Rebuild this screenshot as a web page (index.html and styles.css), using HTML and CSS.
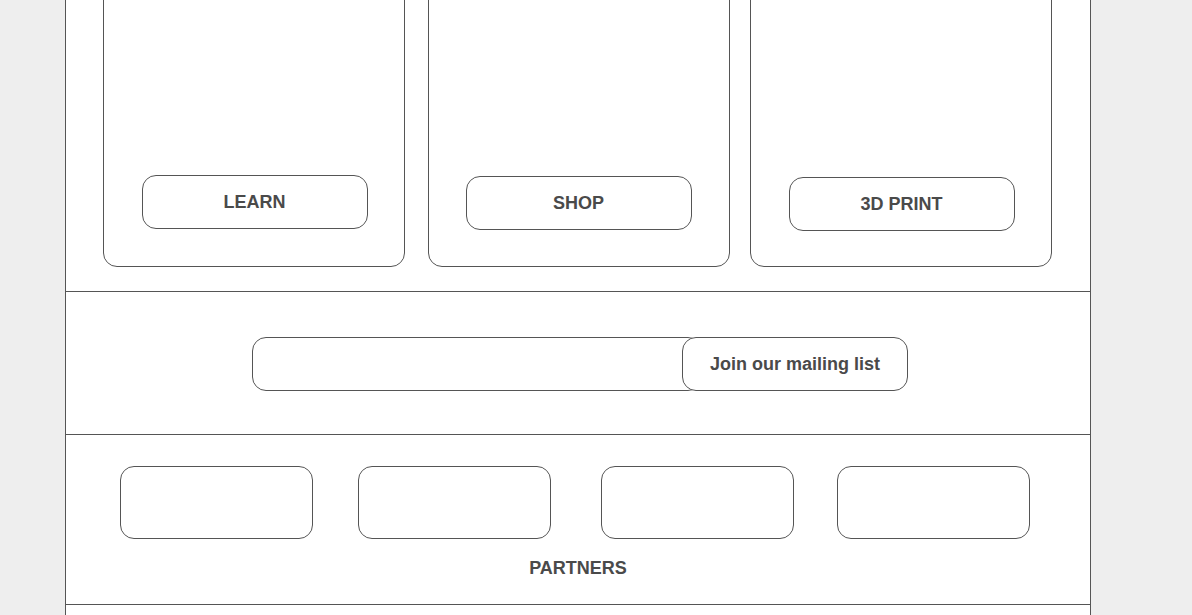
FILE: index.html
```html
<!DOCTYPE html>
<html lang="en">
<head>
    <meta charset="UTF-8">
    <meta name="viewport" content="width=device-width, initial-scale=1.0">
    <title>Home</title>
    <link rel="stylesheet" href="styles.css">
</head>
<body>
    <div class="page">
        <section class="features">
            <div class="card">
                <button class="card-button">LEARN</button>
            </div>
            <div class="card">
                <button class="card-button">SHOP</button>
            </div>
            <div class="card">
                <button class="card-button">3D PRINT</button>
            </div>
        </section>

        <section class="mailing">
            <form class="mailing-form" onsubmit="return false">
                <input type="email" class="mailing-input" aria-label="Email address">
                <button type="submit" class="mailing-button">Join our mailing list</button>
            </form>
        </section>

        <section class="partners">
            <div class="partner-logos">
                <div class="partner"></div>
                <div class="partner"></div>
                <div class="partner"></div>
                <div class="partner"></div>
            </div>
            <h2 class="partners-title">PARTNERS</h2>
        </section>

        <footer class="footer"></footer>
    </div>
</body>
</html>
```

FILE: styles.css
```css
body {
    margin: 0;
    background-color: #eeeeee;
    font-family: 'Liberation Sans', Arial, sans-serif;
    color: #4a4a4a;
}

.page {
    width: 1024px;
    margin: -40px 0 0 65px;
    background-color: #fff;
    border-left: 1px solid #555;
    border-right: 1px solid #555;
}

.features {
    display: flex;
    padding: 24px 38px 24px 37px;
    border-bottom: 1px solid #555;
}

.card {
    width: 302px;
    height: 283px;
    box-sizing: border-box;
    border: 1px solid #555;
    border-radius: 14px;
    display: flex;
    flex-direction: column;
    justify-content: flex-end;
    align-items: center;
    padding: 0 0 37px 1px;
}

.card:nth-child(2) {
    margin-left: 23px;
    padding: 0 1px 36px 0;
}

.card:nth-child(3) {
    margin-left: 20px;
    padding-bottom: 35px;
}

.card-button,
.mailing-button {
    width: 226px;
    height: 54px;
    box-sizing: border-box;
    border: 1px solid #555;
    border-radius: 14px;
    background-color: #fff;
    font-family: inherit;
    font-size: 18px;
    font-weight: bold;
    color: #4a4a4a;
    cursor: pointer;
}

.mailing {
    padding: 45px 0 43px;
    border-bottom: 1px solid #555;
}

.mailing-form {
    display: flex;
    justify-content: center;
    margin-left: 4px;
}

.mailing-input {
    width: 450px;
    height: 54px;
    box-sizing: border-box;
    border: 1px solid #555;
    border-radius: 14px;
    padding: 0 16px;
    font-family: inherit;
    font-size: 16px;
}

.mailing-button {
    margin-left: -20px;
    position: relative;
}

.partners {
    padding: 31px 0 25px;
    border-bottom: 1px solid #555;
}

.partner-logos {
    display: flex;
    padding-left: 54px;
}

.partner {
    width: 193px;
    height: 73px;
    box-sizing: border-box;
    border: 1px solid #555;
    border-radius: 14px;
}

.partner:nth-child(2) {
    margin-left: 45px;
}

.partner:nth-child(3) {
    margin-left: 50px;
}

.partner:nth-child(4) {
    margin-left: 43px;
}

.partners-title {
    margin: 19px 0 0;
    font-size: 18px;
    line-height: 21px;
    text-align: center;
}

.footer {
    height: 120px;
}
```
